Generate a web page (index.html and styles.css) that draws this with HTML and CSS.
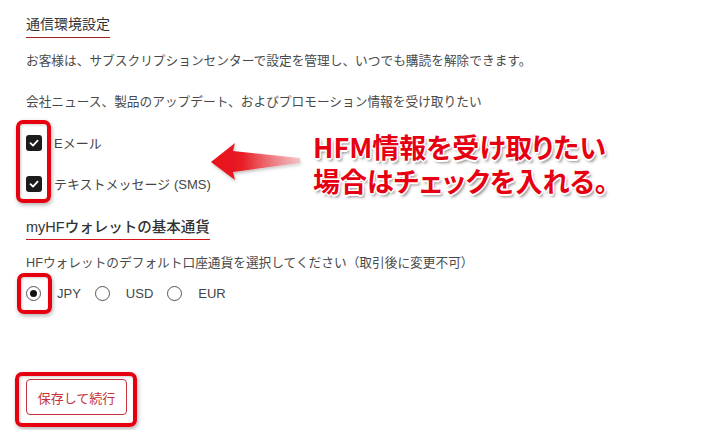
FILE: index.html
```html
<!DOCTYPE html>
<html lang="ja">
<head>
<meta charset="utf-8">
<link rel="stylesheet" href="styles.css">
</head>
<body>
<div class="page">
  <section class="sec">
    <h2 class="title t1">通信環境設定</h2>
    <p class="desc d1">お客様は、サブスクリプションセンターで設定を管理し、いつでも購読を解除できます。</p>
    <p class="desc d2">会社ニュース、製品のアップデート、およびプロモーション情報を受け取りたい</p>
    <div class="checks">
      <label class="check-row"><span class="cbox"><svg viewBox="0 0 16 16" width="16" height="16"><path d="M4.5 8.2 L7 10.6 L11.6 5.6" fill="none" stroke="#fff" stroke-width="1.8" stroke-linecap="round" stroke-linejoin="round"/></svg></span><span class="clabel">Eメール</span></label>
      <label class="check-row"><span class="cbox"><svg viewBox="0 0 16 16" width="16" height="16"><path d="M4.5 8.2 L7 10.6 L11.6 5.6" fill="none" stroke="#fff" stroke-width="1.8" stroke-linecap="round" stroke-linejoin="round"/></svg></span><span class="clabel">テキストメッセージ (SMS)</span></label>
    </div>
  </section>
  <section class="sec">
    <h2 class="title t2">myHFウォレットの基本通貨</h2>
    <p class="desc d3">HFウォレットのデフォルト口座通貨を選択してください（取引後に変更不可）</p>
    <div class="radios">
      <span class="radio on"></span><span class="rlabel">JPY</span>
      <span class="radio"></span><span class="rlabel">USD</span>
      <span class="radio"></span><span class="rlabel">EUR</span>
    </div>
  </section>
  <div class="actions">
    <button class="btn">保存して続行</button>
  </div>

  <div class="mark mark-checks"></div>
  <div class="mark mark-radio"></div>
  <div class="mark mark-btn"></div>

  <svg class="arrow" viewBox="0 0 100 44" width="100" height="44">
    <defs>
      <linearGradient id="ag" x1="0" y1="0" x2="1" y2="0">
        <stop offset="0" stop-color="#e8101a"/>
        <stop offset="0.35" stop-color="#e81c24"/>
        <stop offset="1" stop-color="#f3a3a8" stop-opacity="0.6"/>
      </linearGradient>
      <filter id="as" x="-10%" y="-20%" width="130%" height="150%">
        <feDropShadow dx="1" dy="2" stdDeviation="1.5" flood-color="#000" flood-opacity="0.25"/>
      </filter>
    </defs>
    <polygon points="1,22 25,3 23,11 90,18 90,23 23,32 25,40" fill="url(#ag)" filter="url(#as)"/>
  </svg>

  <div class="callout">
    <div class="cl cl1">HFM情報を受け取りたい</div>
    <div class="cl cl2">場合はチェックを入れる。</div>
  </div>
</div>
</body>
</html>
```

FILE: styles.css
```css
* { box-sizing: border-box; }
html, body { margin: 0; padding: 0; background: #fff; }
body {
  width: 710px;
  height: 430px;
  overflow: hidden;
  font-family: "Liberation Sans", "Noto Sans CJK JP", sans-serif;
  color: #444;
}
.page {
  position: relative;
  padding: 14px 0 0 26px;
  height: 430px;
}
.title {
  display: inline-block;
  margin: 0;
  font-weight: 400;
  color: #333;
  line-height: 20px;
}
.t1 {
  font-size: 14px;
  padding-bottom: 3px;
  border-bottom: 1.5px solid #a3231f;
}
.t2 {
  font-size: 14.5px;
  font-weight: 500;
  padding-bottom: 2px;
  border-bottom: 1.5px solid #d0161b;
}
.desc {
  margin: 0;
  font-size: 12.7px;
  line-height: 18px;
  color: #4a4a4a;
}
.d1 { margin-top: 14px; }
.d2 { margin-top: 23px; }
.d3 { margin-top: 14px; }
.checks {
  display: flex;
  flex-direction: column;
  gap: 25px;
  margin-top: 24px;
}
.check-row {
  display: flex;
  align-items: center;
  gap: 12px;
  height: 16px;
}
.cbox {
  width: 16px;
  height: 16px;
  border-radius: 3px;
  background: #1c1c1c;
  display: flex;
}
.clabel {
  font-size: 13px;
  color: #444;
  position: relative;
  top: -1px;
}
.sec + .sec { margin-top: 25px; }
.radios {
  display: flex;
  align-items: center;
  margin-top: 12px;
  height: 18px;
}
.radio {
  width: 15px;
  height: 15px;
  border-radius: 50%;
  border: 1px solid #555;
  display: flex;
  align-items: center;
  justify-content: center;
  margin-right: 16px;
}
.radio.on::after {
  content: "";
  width: 7px;
  height: 7px;
  border-radius: 50%;
  background: #111;
}
.rlabel {
  font-size: 13px;
  color: #444;
  margin-right: 14px;
}
.actions { margin-top: 77px; }
.btn {
  width: 101px;
  height: 36px;
  border: 1px solid #c6313a;
  border-radius: 4px;
  background: #fff;
  color: #c6313a;
  font-family: "Liberation Sans", "Noto Sans CJK JP", sans-serif;
  font-size: 13px;
  padding: 0;
}
.mark {
  position: absolute;
  border: 4px solid #e6000f;
  border-radius: 7px;
  box-shadow: 1px 2px 4px rgba(0,0,0,0.3), inset 1px 1px 3px rgba(0,0,0,0.2);
}
.mark-checks { left: 16px; top: 120px; width: 35px; height: 83px; }
.mark-radio { left: 17px; top: 273px; width: 35px; height: 41px; }
.mark-btn { left: 15px; top: 372px; width: 122px; height: 55px; }
.arrow {
  position: absolute;
  left: 210px;
  top: 140px;
}
.callout {
  position: absolute;
  left: 313px;
  top: 131px;
  width: 292px;
  font-family: "Noto Sans CJK JP", sans-serif;
  font-weight: 700;
  font-size: 27px;
  color: #e60012;
  font-feature-settings: "palt";
  text-align: center;
  text-shadow:
    1.5px 0 0 #fff, -1.5px 0 0 #fff, 0 1.5px 0 #fff, 0 -1.5px 0 #fff,
    1px 1px 0 #fff, -1px -1px 0 #fff, 1px -1px 0 #fff, -1px 1px 0 #fff,
    2px 3px 3px rgba(0,0,0,0.45);
}
.cl { height: 34px; line-height: 32px; white-space: nowrap; }
```
